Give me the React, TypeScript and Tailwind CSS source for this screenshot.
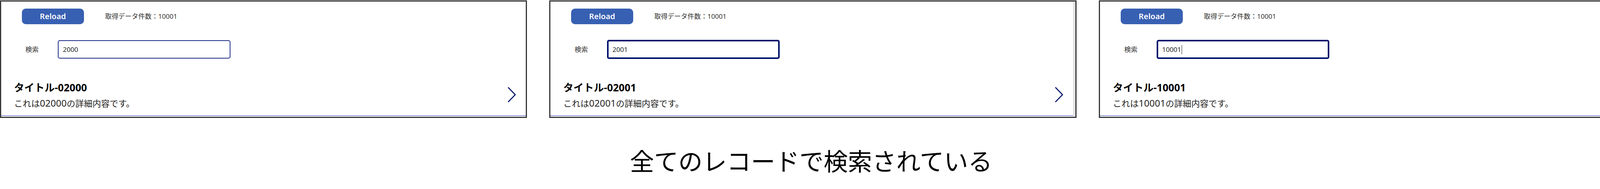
import React from "react";

const FONT = '"Noto Sans", "Noto Sans CJK JP", sans-serif';
const CJK = '"Noto Sans CJK JP", sans-serif';

type PanelProps = {
  width: string;
  query: string;
  num: string;
  focused: boolean;
  scrollbar?: string;
  cursor?: boolean;
};

function Chevron() {
  return (
    <svg width="21" height="39" viewBox="0 0 21 39" fill="none">
      <polyline points="1.5,1.5 19,19.5 1.5,37.5" stroke="#00126b" strokeWidth="2.6" strokeLinecap="round" strokeLinejoin="miter" />
    </svg>
  );
}

function Panel({ width, query, num, focused, scrollbar, cursor }: PanelProps) {
  return (
    <div className={`${width} mt-[1px] h-[301px] border-[3px] border-[#363636] bg-white flex shrink-0`}>
      <div className="flex-1 flex flex-col pt-[18px]">
        <div className="flex items-center h-[40px] pl-[53px]">
          <div className="w-[159px] h-[40px] rounded-[10px] bg-[#3860b2] text-white font-semibold text-[20px] flex items-center justify-center">
            Reload
          </div>
          <div className="ml-[54px] text-[17px] text-[#323130]">取得データ件数：10001</div>
        </div>
        <div className="mt-[40px] h-[49px] flex items-center pl-[62px]">
          <div className="w-[83px] text-[17px] text-[#323130]">検索</div>
          {focused ? (
            <div className="w-[442px] h-[49px] rounded-[5px] border-[4px] border-[#00126b] flex items-center pl-[10px] text-[17px] text-[#201f1e]">
              <span>{query}</span>
              {cursor && <span className="ml-[1px] w-[1px] h-[24px] bg-[#201f1e]" />}
            </div>
          ) : (
            <div className="w-[442px] h-[47px] my-[1px] rounded-[5px] border-[2px] border-[#1d2c86] flex items-center pl-[11px] text-[17px] text-[#201f1e]">
              <span>{query}</span>
            </div>
          )}
        </div>
        <div className="mt-[55px] flex items-center justify-between pl-[33px] pr-[25px]">
          <div className="flex flex-col">
            <div className="text-[26px] leading-[34px] font-bold text-black">
              <span style={{ fontFamily: CJK }}>タイトル</span>-{num}
            </div>
            <div className="mt-[7px] text-[22px] leading-[30px] text-[#252423]">
              <span style={{ fontFamily: CJK }}>これは</span>
              <span className="text-[24px]">{num}</span>
              <span style={{ fontFamily: CJK }}>の詳細内容です。</span>
            </div>
          </div>
          <Chevron />
        </div>
        <div className="mt-[16px] h-[2px] bg-[#8e9ad4]" />
      </div>
      {scrollbar && <div className={`${scrollbar} self-stretch bg-[#e1e1e1]`} />}
    </div>
  );
}

export default function App() {
  return (
    <div className="w-[4167px] h-[484px] bg-white" style={{ fontFamily: FONT }}>
      <div className="flex gap-[57px]">
        <Panel width="w-[1349px]" query="2000" num="02000" focused={false} />
        <Panel width="w-[1350px]" query="2001" num="02001" focused={true} scrollbar="w-[6px]" />
        <Panel width="w-[1353px]" query="10001" num="10001" focused={true} scrollbar="w-[8px]" cursor />
      </div>
      <div
        className="mt-[71px] text-center text-[62px] leading-[74px] text-black pr-[14px]"
        style={{ fontFamily: CJK }}
      >
        全てのレコードで検索されている
      </div>
    </div>
  );
}
